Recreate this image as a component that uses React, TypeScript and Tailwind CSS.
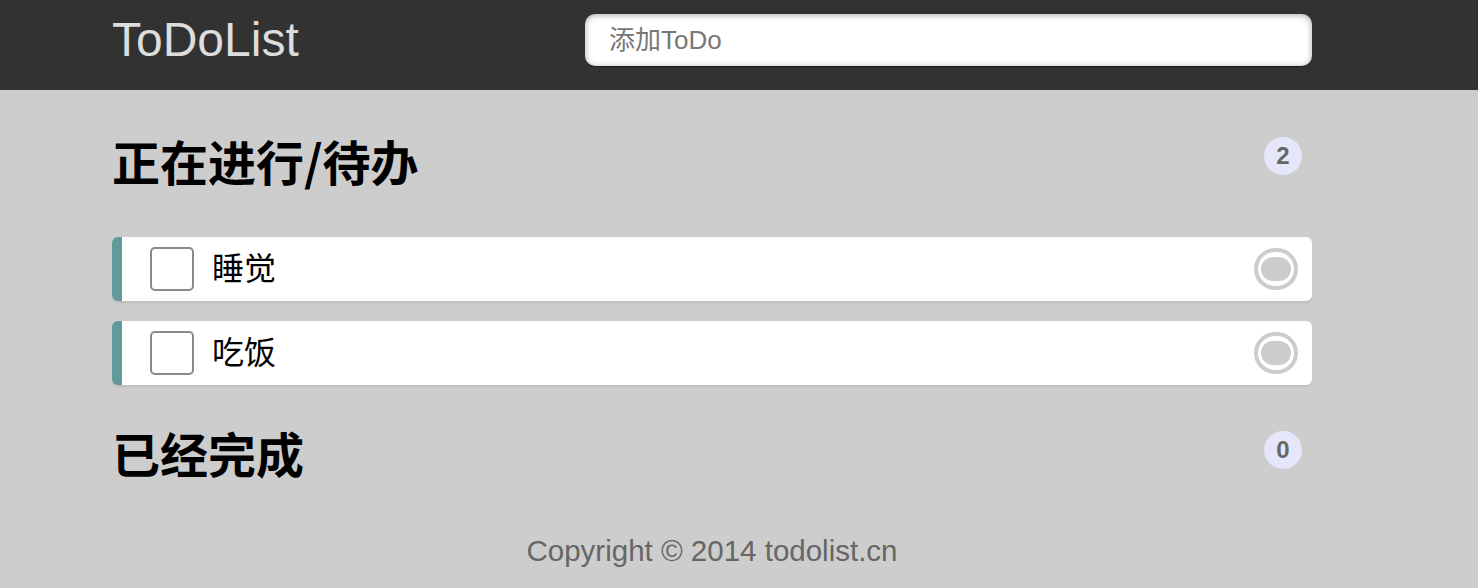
import React from 'react';

const todos = ['睡觉', '吃饭'];

const font = { fontFamily: '"Liberation Sans", "Noto Sans CJK SC", sans-serif' };
const cjk = { fontFamily: '"Noto Sans CJK SC", "Liberation Sans", sans-serif' };

const Badge: React.FC<{ n: number }> = ({ n }) => (
  <span className="flex h-[38px] w-[38px] items-center justify-center rounded-full bg-[#e6e6fa] text-[24px] font-bold text-[#666]">
    {n}
  </span>
);

const TodoItem: React.FC<{ text: string }> = ({ text }) => (
  <li className="flex h-[64px] items-center rounded-[6px] border-l-[10px] border-[#629a9c] bg-white pl-[28px] pr-[14px] shadow-[0_2px_2px_rgba(0,0,0,0.07)]">
    <span className="h-[44px] w-[44px] rounded-[5px] border-2 border-[#8a8a8a] bg-white" />
    <span className="ml-[18px] flex-1 text-[32px] leading-none text-black">{text}</span>
    <span className="flex h-[42px] w-[44px] items-center justify-center rounded-full border-[4px] border-[#cccccc] bg-white">
      <span className="h-[24px] w-[30px] rounded-full bg-[#cccccc]" />
    </span>
  </li>
);

const App: React.FC = () => {
  return (
    <div className="min-h-[588px] bg-[#cdcdcd]" style={font}>
      <header className="h-[90px] bg-[#323232]">
        <div className="ml-[112px] flex w-[1200px] items-center justify-between pt-[14px]">
          <h1 className="text-[48px] leading-none text-[#dddddd]">ToDoList</h1>
          <div className="flex h-[52px] w-[727px] items-center rounded-[10px] bg-white pl-[24px] shadow-[inset_0_1px_6px_rgba(0,0,0,0.35),0_1px_0_rgba(0,0,0,0.45)]">
            <span className="text-[26px] text-[#777]">添加ToDo</span>
          </div>
        </div>
      </header>

      <main className="ml-[112px] w-[1200px]">
        <section>
          <div className="flex items-start justify-between pt-[46px]">
            <h2 className="text-[48px] font-bold leading-none text-black" style={cjk}>
              正在进行/待办
            </h2>
            <div className="mr-[10px] mt-[1px]">
              <Badge n={2} />
            </div>
          </div>
          <ul className="mt-[53px] flex flex-col gap-[20px]">
            {todos.map((t) => (
              <TodoItem key={t} text={t} />
            ))}
          </ul>
        </section>

        <section>
          <div className="flex items-start justify-between pt-[43px]">
            <h2 className="text-[48px] font-bold leading-none text-black" style={cjk}>
              已经完成
            </h2>
            <div className="mr-[10px] mt-[3px]">
              <Badge n={0} />
            </div>
          </div>
        </section>

        <footer className="pt-[53px] text-center text-[29.5px] text-[#666]">
          Copyright © 2014 todolist.cn
        </footer>
      </main>
    </div>
  );
};

export default App;
